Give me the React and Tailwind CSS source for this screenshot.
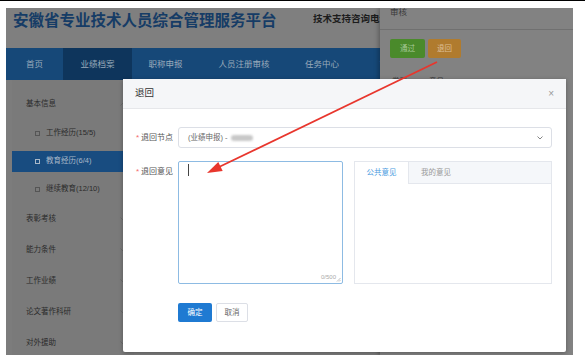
import React from 'react';

const font = { fontFamily: '"Liberation Sans","Noto Sans CJK SC",sans-serif' };

const navItems = [
  { label: '首页', w: 'w-[57px]' },
  { label: '业绩档案', w: 'w-[69px]', active: true },
  { label: '职称申报', w: 'w-[67px]' },
  { label: '人员注册审核', w: 'w-[90px]' },
  { label: '任务中心', w: 'w-[66px]' },
  { label: '管理', w: 'w-[66px]' },
];

function Chevron({ up }) {
  return (
    <svg width="6" height="4" viewBox="0 0 6 4" className="shrink-0">
      <path d={up ? 'M0.5 3.5 L3 1 L5.5 3.5' : 'M0.5 0.5 L3 3 L5.5 0.5'} fill="none" stroke="#666" strokeWidth="0.8" />
    </svg>
  );
}

function TopItem({ label, up }) {
  return (
    <div className="h-[31px] flex items-center justify-between pl-[14px] pr-[8px] text-[7.5px] text-[#2b2b2b]">
      <span>{label}</span>
      <Chevron up={up} />
    </div>
  );
}

function SubItem({ label, active }) {
  return (
    <div className="h-[28px] flex items-center">
      <div className={`h-[21px] w-full flex items-center gap-[6px] pl-[23px] text-[7.5px] ${active ? 'bg-[#184c80] text-[#a8b8c8]' : 'text-[#2b2b2b]'}`}>
        <span className={`w-[5px] h-[5px] border-[0.8px] ${active ? 'border-[#a8b8c8]' : 'border-[#555]'}`} />
        <span>{label}</span>
      </div>
    </div>
  );
}

export default function App() {
  return (
    <div className="relative w-[585px] h-[362px] bg-white border-t border-black overflow-hidden" style={font}>
      <div className="pt-[7px] pl-[6px]">
        <div className="relative w-[567px] h-[347px] overflow-hidden bg-[#7c7c7c]">
          {/* header */}
          <div className="h-[40px] flex items-start bg-[#7f7f7f]">
            <div className="w-[307px] pl-[7px] pt-[3px] text-[15.5px] leading-[20px] font-bold text-[#163c66] whitespace-nowrap">
              安徽省专业技术人员综合管理服务平台
            </div>
            <div className="w-[67px] overflow-hidden mt-[6px] text-[9.5px] leading-[10px] font-bold text-[#1c1c1c] whitespace-nowrap">
              技术支持咨询电话
            </div>
          </div>

          {/* nav */}
          <div className="h-[32px] flex bg-[#164878]">
            {navItems.map((n) => (
              <div
                key={n.label}
                className={`${n.w} shrink-0 flex items-center justify-center text-[8.5px] text-[#9aabbb] whitespace-nowrap ${n.active ? 'bg-[#0e355c]' : ''}`}
              >
                {n.label}
              </div>
            ))}
          </div>

          {/* body */}
          <div className="flex">
            <div className="ml-[6px] w-[122px] h-[275px] bg-[#7a7a7a] pt-[8px]">
              <TopItem label="基本信息" up />
              <SubItem label="工作经历(15/5)" />
              <SubItem label="教育经历(6/4)" active />
              <SubItem label="继续教育(12/10)" />
              <TopItem label="表彰考核" />
              <TopItem label="能力条件" />
              <TopItem label="工作业绩" />
              <TopItem label="论文著作科研" />
              <TopItem label="对外援助" />
            </div>
          </div>

          {/* drawer */}
          <div className="absolute top-0 right-0 w-[193px] h-full bg-[#828282] shadow-[-2px_0_4px_rgba(0,0,0,0.25)]">
            <div className="h-[22px] border-b border-[#707070] pl-[10px]">
              <div className="text-[8.5px] leading-[9px] text-[#3a3a3a]">审核</div>
            </div>
            <div className="flex gap-[3px] pl-[10px] pt-[9px]">
              <div className="w-[35px] h-[19px] rounded-[2px] bg-[#4a8a2b] flex items-center justify-center text-[7.5px] text-[#a6c996]">通过</div>
              <div className="w-[33px] h-[19px] rounded-[2px] bg-[#b07b2e] flex items-center justify-center text-[7.5px] text-[#dcbf98]">退回</div>
            </div>
            <div className="flex gap-[22px] pl-[12px] pt-[18px] text-[7.5px] text-[#3a3a3a]">
              <span>类型</span>
              <span>意见</span>
            </div>
          </div>

          {/* modal */}
          <div className="absolute left-[117px] top-[71px] w-[443px] h-[273px] bg-white rounded-[2px] shadow-[0_1px_4px_rgba(0,0,0,0.3)]">
            <div className="h-[30px] flex items-center justify-between px-[12px] bg-[#f5f6f8] border-b border-[#e6e7ea]">
              <span className="text-[9.5px] text-[#333]">退回</span>
              <span className="text-[10px] text-[#999]">×</span>
            </div>

            <div className="flex mt-[18px]">
              <div className="w-[55px] pr-[5px] h-[21px] flex items-center justify-end text-[8px] text-[#555]">
                <span className="text-[#f56c6c] mr-[2px]">*</span>退回节点
              </div>
              <div className="w-[374px] h-[21px] border border-[#dcdfe6] rounded-[3px] flex items-center justify-between pl-[9px] pr-[8px]">
                <div className="flex items-center gap-[3px] text-[7.5px] text-[#666]">
                  <span>(业绩申报) -</span>
                  <span className="w-[22px] h-[6px] rounded-full bg-[#c8c8c8] blur-[1px]" />
                </div>
                <Chevron />
              </div>
            </div>

            <div className="flex mt-[13px]">
              <div className="w-[55px] pr-[5px] h-[21px] flex items-center justify-end text-[8px] text-[#555]">
                <span className="text-[#f56c6c] mr-[2px]">*</span>退回意见
              </div>
              <div className="relative w-[165px] h-[123px] border border-[#8dbbe3] rounded-[2px]">
                <div className="absolute left-[9px] top-[2px] w-px h-[12px] bg-[#444]" />
                <span className="absolute right-[6px] bottom-[1px] text-[6px] text-[#aaa]">0/500</span>
                <svg width="5" height="5" viewBox="0 0 5 5" className="absolute right-[1px] bottom-[1px]">
                  <path d="M1 4.5 L4.5 1 M3 4.5 L4.5 3" stroke="#999" strokeWidth="0.6" />
                </svg>
              </div>
              <div className="ml-[11px] w-[198px] h-[123px] border border-[#e4e7ed]">
                <div className="h-[22px] flex bg-[#f5f7fa] border-b border-[#e4e7ed]">
                  <div className="w-[54px] h-[22px] bg-white border-r border-[#e4e7ed] flex items-center justify-center text-[7.5px] text-[#4a9be0]">公共意见</div>
                  <div className="pl-[12px] flex items-center text-[7.5px] text-[#999]">我的意见</div>
                </div>
              </div>
            </div>

            <div className="flex gap-[4px] ml-[55px] mt-[19px]">
              <div className="w-[34px] h-[19px] rounded-[2px] bg-[#1f7ad2] flex items-center justify-center text-[7.5px] text-white">确定</div>
              <div className="w-[32px] h-[19px] rounded-[2px] border border-[#dcdfe6] flex items-center justify-center text-[7.5px] text-[#666]">取消</div>
            </div>
          </div>
        </div>
      </div>

      {/* annotation arrow */}
      <svg width="585" height="362" className="absolute left-0 top-0 pointer-events-none">
        <line x1="437" y1="61" x2="219" y2="166" stroke="#e8362d" strokeWidth="1.8" />
        <polygon points="207,172 222.7,170 218.3,161" fill="#e8362d" />
      </svg>
    </div>
  );
}
